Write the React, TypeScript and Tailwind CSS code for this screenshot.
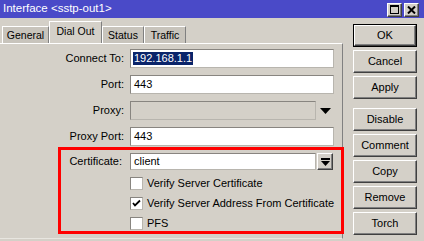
import React from "react";

const btn3d =
  "border-t border-l border-t-white border-l-white border-b border-r border-b-[#404040] border-r-[#404040] shadow-[inset_-1px_-1px_0_#808080] bg-[#d4d0c8]";

function Btn({ label, def }: { label: string; def?: boolean }) {
  if (def) {
    return (
      <div className="h-[23px] w-[64px] border border-black">
        <div className={`h-full w-full flex items-center justify-center ${btn3d}`}>
          <span className="text-[11px] leading-none">{label}</span>
        </div>
      </div>
    );
  }
  return (
    <div className={`h-[23px] w-[64px] flex items-center justify-center ${btn3d}`}>
      <span className="text-[11px] leading-none">{label}</span>
    </div>
  );
}

const inputCls =
  "border-t border-l border-t-[#888580] border-l-[#888580] border-b border-r border-b-[#b8b5ae] border-r-[#b8b5ae]";

function Row({ label, children }: { label: string; children: React.ReactNode }) {
  return (
    <div className="flex items-center h-[19px]">
      <div className="w-[124px] text-right text-[11px] leading-none">{label}</div>
      <div className="ml-[6px] flex items-center">{children}</div>
    </div>
  );
}

function Check({ checked, label }: { checked?: boolean; label: string }) {
  return (
    <div className="flex items-center h-[13px] ml-[130px]">
      <div className={`w-[13px] h-[13px] bg-white ${inputCls} flex items-center justify-center`}>
        {checked && (
          <svg width="9" height="9" viewBox="0 0 9 9">
            <path d="M1 4 L3 6.5 L8 1.5" stroke="#000" strokeWidth="1.8" fill="none" />
          </svg>
        )}
      </div>
      <span className="ml-[4px] text-[11px] leading-none">{label}</span>
    </div>
  );
}

export default function App() {
  return (
    <div className="w-[424px] h-[241px] bg-[#d4d0c8] overflow-hidden relative text-black font-['Liberation_Sans',Arial,sans-serif]">
      {/* title bar */}
      <div className="h-[18px] bg-[#4a4ac8] flex items-center justify-between pl-[3px] pr-[5px]">
        <span className="text-white text-[11.5px] leading-none">Interface &lt;sstp-out1&gt;</span>
        <div className="flex gap-[2px] mt-[1px]">
          <div className={`w-[15px] h-[14px] flex items-center justify-center ${btn3d}`}>
            <svg width="9" height="9" viewBox="0 0 9 9">
              <rect x="0.5" y="0.5" width="8" height="8" fill="none" stroke="#000" />
              <rect x="0" y="0" width="9" height="2" fill="#000" />
            </svg>
          </div>
          <div className={`w-[15px] h-[14px] flex items-center justify-center ${btn3d}`}>
            <svg width="9" height="8" viewBox="0 0 9 8">
              <path d="M1 0.5 L8 7.5 M8 0.5 L1 7.5" stroke="#000" strokeWidth="2" />
            </svg>
          </div>
        </div>
      </div>

      <div className="flex">
        {/* left panel */}
        <div className="w-[343px]">
          {/* tabs */}
          <div className="mt-[3px] h-[22px] flex items-end pl-[2px]">
            <div className="h-[17px] w-[47px] bg-[#c8c4bc] border-t border-l border-t-white border-l-white border-r border-r-[#808080] flex items-center justify-center">
              <span className="text-[10.5px] leading-none">General</span>
            </div>
            <div className="h-[22px] w-[53px] bg-[#d4d0c8] border-t border-l border-t-white border-l-white border-r border-r-[#808080] flex items-start justify-center pt-[4px]">
              <span className="text-[10.5px] leading-none">Dial Out</span>
            </div>
            <div className="h-[17px] w-[42px] bg-[#c8c4bc] border-t border-l border-t-white border-l-white border-r border-r-[#808080] flex items-center justify-center">
              <span className="text-[10.5px] leading-none">Status</span>
            </div>
            <div className="h-[17px] w-[42px] bg-[#c8c4bc] border-t border-l border-t-white border-l-white border-r border-r-[#808080] flex items-center justify-center">
              <span className="text-[10.5px] leading-none">Traffic</span>
            </div>
          </div>
          {/* panel */}
          <div className="h-[196px] border-t border-t-white border-r border-r-[#808080] border-b border-b-[#e8e6e0] pt-[5px] flex flex-col">
            <div className="flex flex-col gap-[7px]">
              <Row label="Connect To:">
                <div className={`w-[204px] h-[19px] bg-white ${inputCls} flex items-center pl-[2px]`}>
                  <span className="bg-[#0a246a] text-white text-[11px] leading-[13px] px-[1px]">192.168.1.1</span>
                </div>
              </Row>
              <Row label="Port:">
                <div className={`w-[204px] h-[19px] bg-white ${inputCls} flex items-center pl-[3px]`}>
                  <span className="text-[11px] leading-none">443</span>
                </div>
              </Row>
              <Row label="Proxy:">
                <div className={`w-[186px] h-[19px] bg-[#d4d0c8] ${inputCls}`} />
                <svg className="ml-[4px]" width="12" height="6" viewBox="0 0 12 6">
                  <path d="M0 0 H11 L5.5 6 Z" fill="#000" />
                </svg>
              </Row>
              <Row label="Proxy Port:">
                <div className={`w-[204px] h-[19px] bg-white ${inputCls} flex items-center pl-[3px]`}>
                  <span className="text-[11px] leading-none">443</span>
                </div>
              </Row>
            </div>
            <div className="flex items-center h-[17px] mt-[7px]">
              <div className="w-[122px] text-right text-[11px] leading-none">Certificate:</div>
              <div className="ml-[8px] flex items-center">
                <div className={`w-[186px] h-[17px] bg-white ${inputCls} flex items-center pl-[3px]`}>
                  <span className="text-[11px] leading-none">client</span>
                </div>
                <div className={`ml-[1px] w-[16px] h-[17px] flex items-center justify-center ${btn3d}`}>
                  <svg width="9" height="8" viewBox="0 0 9 8">
                    <rect x="0" y="0" width="9" height="2" fill="#000" />
                    <path d="M0 3 H9 L4.5 8 Z" fill="#000" />
                  </svg>
                </div>
              </div>
            </div>
            <div className="mt-[7px] flex flex-col gap-[7px]">
              <Check label="Verify Server Certificate" />
              <Check checked label="Verify Server Address From Certificate" />
              <Check label="PFS" />
            </div>
          </div>
        </div>

        {/* right buttons */}
        <div className="ml-[10px] pt-[6px] flex flex-col">
          <div className="flex flex-col gap-[3px]">
            <Btn label="OK" def />
            <Btn label="Cancel" />
            <Btn label="Apply" />
          </div>
          <div className="mt-[9px] flex flex-col gap-[3px]">
            <Btn label="Disable" />
            <Btn label="Comment" />
            <Btn label="Copy" />
            <Btn label="Remove" />
            <Btn label="Torch" />
          </div>
        </div>
      </div>

      {/* red highlight overlay */}
      <div className="absolute left-[58px] top-[147px] w-[286px] h-[87px] border-[3px] border-[#ff0000] pointer-events-none" />
    </div>
  );
}
